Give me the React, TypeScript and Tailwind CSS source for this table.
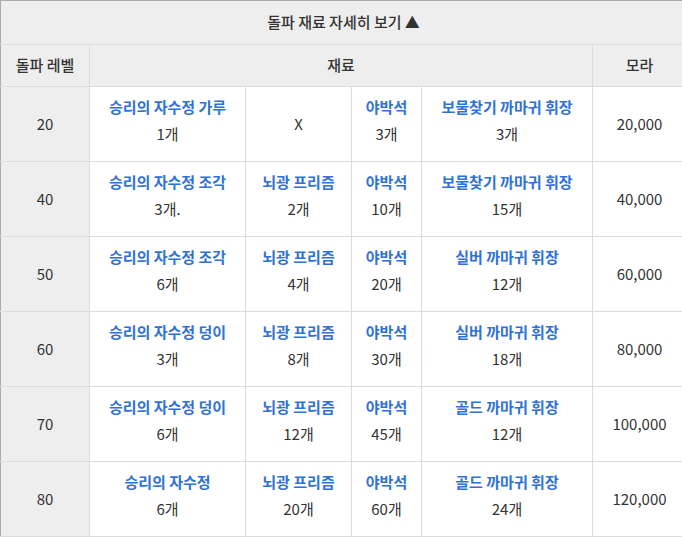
import React from "react";

type Cell = { name: string; qty: string } | null;
type Row = { level: string; mats: Cell[]; mora: string };

const rows: Row[] = [
  { level: "20", mats: [{ name: "승리의 자수정 가루", qty: "1개" }, null, { name: "야박석", qty: "3개" }, { name: "보물찾기 까마귀 휘장", qty: "3개" }], mora: "20,000" },
  { level: "40", mats: [{ name: "승리의 자수정 조각", qty: "3개." }, { name: "뇌광 프리즘", qty: "2개" }, { name: "야박석", qty: "10개" }, { name: "보물찾기 까마귀 휘장", qty: "15개" }], mora: "40,000" },
  { level: "50", mats: [{ name: "승리의 자수정 조각", qty: "6개" }, { name: "뇌광 프리즘", qty: "4개" }, { name: "야박석", qty: "20개" }, { name: "실버 까마귀 휘장", qty: "12개" }], mora: "60,000" },
  { level: "60", mats: [{ name: "승리의 자수정 덩이", qty: "3개" }, { name: "뇌광 프리즘", qty: "8개" }, { name: "야박석", qty: "30개" }, { name: "실버 까마귀 휘장", qty: "18개" }], mora: "80,000" },
  { level: "70", mats: [{ name: "승리의 자수정 덩이", qty: "6개" }, { name: "뇌광 프리즘", qty: "12개" }, { name: "야박석", qty: "45개" }, { name: "골드 까마귀 휘장", qty: "12개" }], mora: "100,000" },
  { level: "80", mats: [{ name: "승리의 자수정", qty: "6개" }, { name: "뇌광 프리즘", qty: "20개" }, { name: "야박석", qty: "60개" }, { name: "골드 까마귀 휘장", qty: "24개" }], mora: "120,000" },
];

export default function App() {
  return (
    <div
      className="w-[682px] h-[537px] overflow-hidden bg-white text-[15px] text-[#333]"
      style={{ fontFamily: '"Noto Sans CJK KR", "Noto Sans", sans-serif' }}
    >
      <table className="w-[686px] table-fixed border-collapse border-t border-l border-t-[#aaa] border-l-[#aaa]">
        <colgroup>
          <col className="w-[89px]" />
          <col className="w-[156px]" />
          <col className="w-[106px]" />
          <col className="w-[70px]" />
          <col className="w-[171px]" />
          <col className="w-[94px]" />
        </colgroup>
        <thead>
          <tr className="h-[44px] bg-[#eeeeee]">
            <th colSpan={6} className="border border-[#dcdcdc] border-t-[#aaa] border-l-[#aaa] font-medium text-center p-0">
              돌파 재료 자세히 보기 ▲
            </th>
          </tr>
          <tr className="h-[42px] bg-[#eeeeee]">
            <th className="border border-[#dcdcdc] border-l-[#aaa] font-medium text-center p-0">돌파 레벨</th>
            <th colSpan={4} className="border border-[#dcdcdc] font-medium text-center p-0">재료</th>
            <th className="border border-[#dcdcdc] font-medium text-center p-0">모라</th>
          </tr>
        </thead>
        <tbody>
          {rows.map((r) => (
            <tr key={r.level} className="h-[75px]">
              <td className="border border-[#dcdcdc] border-l-[#aaa] bg-[#eeeeee] text-center p-0">{r.level}</td>
              {r.mats.map((m, i) =>
                m ? (
                  <td key={i} className="border border-[#dcdcdc] text-center p-0 pb-[8px] leading-[27px]">
                    <div className="text-[#2f72d6] font-semibold">{m.name}</div>
                    <div>{m.qty}</div>
                  </td>
                ) : (
                  <td key={i} className="border border-[#dcdcdc] text-center p-0">X</td>
                )
              )}
              <td className="border border-[#dcdcdc] text-center p-0">{r.mora}</td>
            </tr>
          ))}
        </tbody>
      </table>
    </div>
  );
}
